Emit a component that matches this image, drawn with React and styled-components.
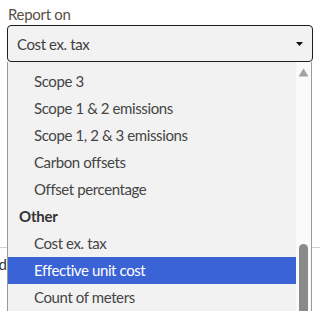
import React from "react";
import styled, { createGlobalStyle } from "styled-components";

const Global = createGlobalStyle`
  html, body { margin: 0; padding: 0; background: #fff; }
  body { font-family: Lato, "Noto Sans", sans-serif; overflow: hidden; }
`;

const Page = styled.div`
  position: relative;
  width: 320px;
  height: 311px;
  overflow: hidden;
`;

const Field = styled.div`
  padding: 4px 7px 0 7px;
  display: flex;
  flex-direction: column;
`;

const Label = styled.label`
  font-size: 15px;
  line-height: 20px;
  letter-spacing: -0.3px;
  color: #574f47;
  padding-left: 1px;
  height: 21px;
`;

const SelectBox = styled.div`
  height: 37px;
  box-sizing: border-box;
  border: 1.5px solid #1e1e1e;
  border-radius: 4px;
  background: #f2f2f2;
  display: flex;
  align-items: center;
  justify-content: space-between;
  padding: 0 9px 0 9px;
  font-size: 15px;
  letter-spacing: -0.4px;
  color: #3f3f3f;
`;

const Caret = styled.svg`
  width: 7px;
  height: 4px;
  margin-top: 1px;
`;

const Behind = styled.div`
  margin-top: 185px;
  border-top: 1px solid #d0d0d0;
  padding-top: 6px;
  font-size: 15px;
  color: #333;
  line-height: 20px;
`;

const CutText = styled.div`
  width: 7px;
  overflow: hidden;
  display: flex;
  justify-content: flex-end;
  white-space: nowrap;
`;

const Dropdown = styled.div`
  position: absolute;
  left: 7px;
  top: 62px;
  width: 305px;
  height: 260px;
  box-sizing: border-box;
  border-left: 1px solid #9a9a9a;
  border-right: 1px solid #9a9a9a;
  background: #f2f2f2;
  display: flex;
`;

const List = styled.ul`
  list-style: none;
  margin: 0;
  padding: 6px 0 0 0;
  flex: 1;
`;

const Item = styled.li`
  height: 27px;
  display: flex;
  align-items: center;
  padding-left: ${(p) => (p.$group ? "11px" : "26px")};
  padding-bottom: 1px;
  box-sizing: border-box;
  font-size: 15px;
  letter-spacing: ${(p) => (p.$group ? "-0.2px" : "-0.4px")};
  font-weight: ${(p) => (p.$group ? 700 : 400)};
  color: ${(p) => (p.$active ? "#ffffff" : p.$group ? "#333" : "#454545")};
  background: ${(p) => (p.$active ? "#3a63d6" : "transparent")};
`;

const Scrollbar = styled.div`
  width: 15px;
  background: #fafafa;
  position: relative;
  display: flex;
  flex-direction: column;
  align-items: center;
`;

const UpArrow = styled.svg`
  width: 11px;
  height: 9px;
  margin-top: 6px;
`;

const Thumb = styled.div`
  position: absolute;
  left: 3px;
  top: 182px;
  width: 9px;
  height: 90px;
  border-radius: 5px;
  background: #8a8a8a;
`;

const items = [
  { t: "Scope 3" },
  { t: "Scope 1 & 2 emissions" },
  { t: "Scope 1, 2 & 3 emissions" },
  { t: "Carbon offsets" },
  { t: "Offset percentage" },
  { t: "Other", group: true },
  { t: "Cost ex. tax" },
  { t: "Effective unit cost", active: true },
  { t: "Count of meters" },
];

export default function App() {
  return (
    <Page>
      <Global />
      <Field>
        <Label>Report on</Label>
        <SelectBox>
          <span>Cost ex. tax</span>
          <Caret viewBox="0 0 7 4">
            <path d="M0 0 L7 0 L3.5 4 Z" fill="#111" />
          </Caret>
        </SelectBox>
      </Field>
      <Behind>
        <CutText>Period</CutText>
      </Behind>
      <Dropdown>
        <List>
          {items.map((it) => (
            <Item key={it.t} $group={it.group} $active={it.active}>
              {it.t}
            </Item>
          ))}
        </List>
        <Scrollbar>
          <UpArrow viewBox="0 0 11 9">
            <path d="M5.5 0.5 L10.5 8.5 L0.5 8.5 Z" fill="#a3a3a3" />
          </UpArrow>
          <Thumb />
        </Scrollbar>
      </Dropdown>
    </Page>
  );
}
